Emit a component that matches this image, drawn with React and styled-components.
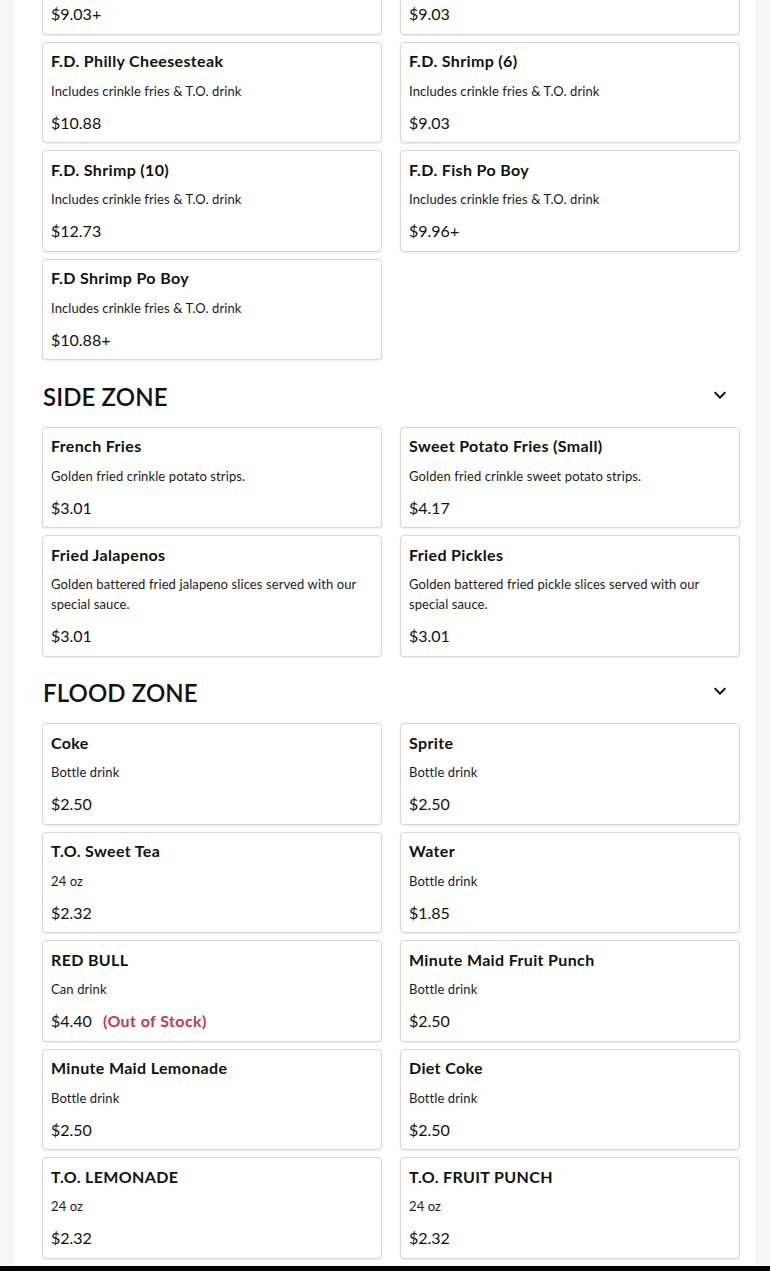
import React from "react";
import styled, { createGlobalStyle } from "styled-components";

const Global = createGlobalStyle`
  html, body { margin: 0; padding: 0; background: #f7f7f7; }
  body { font-family: "Lato", "Noto Sans", sans-serif; color: #111; overflow: hidden; }
`;

const Page = styled.div`
  display: flex;
  justify-content: flex-start;
`;

const Main = styled.main`
  margin-left: 14px;
  width: 741px;
  background: #fff;
  padding: 0 15px 8px 28px;
  box-sizing: border-box;
  margin-top: -67px;
`;

const Section = styled.section`
  display: flex;
  flex-direction: column;
  & + & { margin-top: 20.5px; }
`;

const SectionHeader = styled.div`
  display: flex;
  align-items: center;
  justify-content: space-between;
  height: 32px;
  margin-bottom: 14px;
`;

const SectionTitle = styled.h2`
  margin: 0 0 0 1px;
  font-size: 24px;
  font-weight: 600;
  line-height: 32px;
  letter-spacing: 0.1px;
  color: #111;
`;

const Chevron = styled.svg`
  width: 24px;
  height: 24px;
  margin-right: 8px;
  margin-top: -4px;
  fill: #111;
`;

const Grid = styled.div`
  display: grid;
  grid-template-columns: 1fr 1fr;
  column-gap: 18px;
  row-gap: 7px;
`;

const Card = styled.div`
  border: 1px solid #d6d6d6;
  border-radius: 4px;
  box-shadow: 0 1px 2px rgba(0, 0, 0, 0.08);
  background: #fff;
  padding: 8.5px 8px 8.5px;
  display: flex;
  flex-direction: column;
`;

const Title = styled.div`
  font-size: 16px;
  font-weight: 700;
  line-height: 20px;
  letter-spacing: 0.35px;
  color: #111;
`;

const Desc = styled.div`
  margin-top: 9.5px;
  font-size: 13px;
  line-height: 20px;
  letter-spacing: 0.1px;
  color: #1a1a1a;
`;

const PriceRow = styled.div`
  margin-top: 11px;
  display: flex;
  align-items: center;
  line-height: 22px;
`;

const Price = styled.span`
  font-size: 16px;
  color: #111;
`;

const Stock = styled.span`
  margin-left: 11px;
  font-size: 16px;
  font-weight: 700;
  letter-spacing: 0.4px;
  color: #c8364f;
`;

const BottomBar = styled.div`
  position: fixed;
  left: 0;
  right: 0;
  bottom: 0;
  height: 5px;
  background: #000;
`;

const sections = [
  {
    title: null,
    items: [
      { t: "F.D. Chicken Tenders (3)", d: "Includes crinkle fries & T.O. drink", p: "$9.03+" },
      { t: "F.D. Catfish (2)", d: "Includes crinkle fries & T.O. drink", p: "$9.03" },
      { t: "F.D. Philly Cheesesteak", d: "Includes crinkle fries & T.O. drink", p: "$10.88" },
      { t: "F.D. Shrimp (6)", d: "Includes crinkle fries & T.O. drink", p: "$9.03" },
      { t: "F.D. Shrimp (10)", d: "Includes crinkle fries & T.O. drink", p: "$12.73" },
      { t: "F.D. Fish Po Boy", d: "Includes crinkle fries & T.O. drink", p: "$9.96+" },
      { t: "F.D Shrimp Po Boy", d: "Includes crinkle fries & T.O. drink", p: "$10.88+" },
    ],
  },
  {
    title: "SIDE ZONE",
    items: [
      { t: "French Fries", d: "Golden fried crinkle potato strips.", p: "$3.01" },
      { t: "Sweet Potato Fries (Small)", d: "Golden fried crinkle sweet potato strips.", p: "$4.17" },
      { t: "Fried Jalapenos", d: "Golden battered fried jalapeno slices served with our special sauce.", p: "$3.01" },
      { t: "Fried Pickles", d: "Golden battered fried pickle slices served with our special sauce.", p: "$3.01" },
    ],
  },
  {
    title: "FLOOD ZONE",
    items: [
      { t: "Coke", d: "Bottle drink", p: "$2.50" },
      { t: "Sprite", d: "Bottle drink", p: "$2.50" },
      { t: "T.O. Sweet Tea", d: "24 oz", p: "$2.32" },
      { t: "Water", d: "Bottle drink", p: "$1.85" },
      { t: "RED BULL", d: "Can drink", p: "$4.40", out: true },
      { t: "Minute Maid Fruit Punch", d: "Bottle drink", p: "$2.50" },
      { t: "Minute Maid Lemonade", d: "Bottle drink", p: "$2.50" },
      { t: "Diet Coke", d: "Bottle drink", p: "$2.50" },
      { t: "T.O. LEMONADE", d: "24 oz", p: "$2.32" },
      { t: "T.O. FRUIT PUNCH", d: "24 oz", p: "$2.32" },
    ],
  },
];

export default function App() {
  return (
    <>
      <Global />
      <Page>
        <Main>
          {sections.map((s, i) => (
            <Section key={i}>
              {s.title && (
                <SectionHeader>
                  <SectionTitle>{s.title}</SectionTitle>
                  <Chevron viewBox="0 0 24 24">
                    <path d="M16.59 8.59L12 13.17 7.41 8.59 6 10l6 6 6-6z" />
                  </Chevron>
                </SectionHeader>
              )}
              <Grid>
                {s.items.map((it) => (
                  <Card key={it.t}>
                    <Title>{it.t}</Title>
                    <Desc>{it.d}</Desc>
                    <PriceRow>
                      <Price>{it.p}</Price>
                      {it.out && <Stock>(Out of Stock)</Stock>}
                    </PriceRow>
                  </Card>
                ))}
              </Grid>
            </Section>
          ))}
        </Main>
      </Page>
      <BottomBar />
    </>
  );
}
